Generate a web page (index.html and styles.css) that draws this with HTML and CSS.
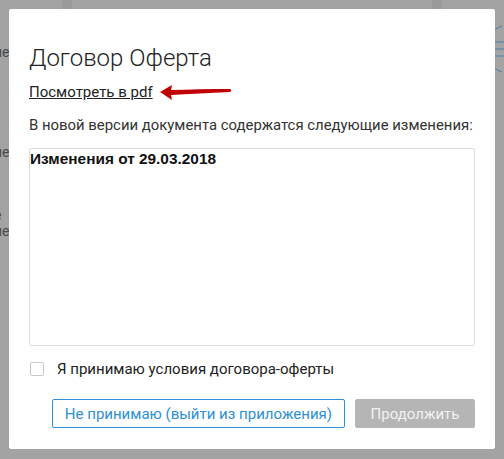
FILE: index.html
```html
<!DOCTYPE html>
<html lang="ru">
<head>
    <meta charset="UTF-8">
    <meta name="viewport" content="width=device-width, initial-scale=1.0">
    <title>Договор Оферта</title>
    <link rel="stylesheet" href="styles.css">
</head>
<body>
    <div class="backdrop">
        <span class="bg-word w1">ие</span>
        <span class="bg-word w2">ие</span>
        <span class="bg-word w3">е<br>ие</span>
        <div class="bg-bar b1"></div>
        <div class="bg-bar b2"></div>
        <svg class="bg-icon" width="20" height="50" viewBox="0 0 20 50">
            <path d="M18 2 C6 6 2 16 2 25 C2 34 6 44 18 48" fill="none" stroke="#4a7fa8" stroke-width="1"/>
            <path d="M6 18 H20 M6 25 H20 M6 32 H20 M8 18 V32" fill="none" stroke="#4a7fa8" stroke-width="1"/>
        </svg>
    </div>

    <div class="modal">
        <h1 class="modal-title">Договор Оферта</h1>

        <div class="pdf-row">
            <a href="#" class="pdf-link">Посмотреть в pdf</a>
            <svg class="arrow" width="74" height="18" viewBox="0 0 74 18">
                <path d="M1 8 L13 1 L12 6 C30 5.5 50 5 71 5 C72.5 5 72.5 8 71 8 C50 9 30 10 12 11 L13 16 Z" fill="#c00000"/>
            </svg>
        </div>

        <p class="intro">В новой версии документа содержатся следующие изменения:</p>

        <div class="changes">
            <b>Изменения от 29.03.2018</b>
        </div>

        <div class="accept">
            <input type="checkbox" id="accept">
            <label for="accept">Я принимаю условия договора-оферты</label>
        </div>

        <div class="actions">
            <button type="button" class="btn btn-outline">Не принимаю (выйти из приложения)</button>
            <button type="button" class="btn btn-disabled" disabled>Продолжить</button>
        </div>
    </div>
</body>
</html>
```

FILE: styles.css
```css
body {
    margin: 0;
    padding: 9px;
    background: #a3a3a3;
    font-family: Roboto, "Liberation Sans", sans-serif;
    position: relative;
}
.backdrop {
    position: absolute;
    top: 0;
    left: 0;
    width: 504px;
    height: 459px;
    overflow: hidden;
}
.bg-word {
    position: absolute;
    left: -6px;
    color: #4a4a4a;
    font-size: 14px;
    line-height: 16px;
}
.w1 { top: 44px; }
.w2 { top: 144px; }
.w3 { top: 207px; }
.bg-bar {
    position: absolute;
    top: 0;
    height: 9px;
    background: #9a9a9a;
    width: 10px;
}
.b1 { left: 62px; }
.b2 { left: 432px; }
.bg-icon {
    position: absolute;
    right: 0;
    top: 24px;
}
.modal {
    position: relative;
    background: #fff;
    width: 446px;
    height: 405px;
    padding: 35px 20px 0 20px;
    border-radius: 2px;
}
.modal-title {
    margin: 0;
    font-size: 24px;
    line-height: 28px;
    font-weight: 300;
    color: #222;
}
.pdf-row {
    display: flex;
    align-items: center;
    margin-top: 10px;
    height: 20px;
}
.pdf-link {
    color: #222;
    font-size: 15px;
    line-height: 20px;
    text-decoration: underline;
}
.arrow {
    margin-left: 6px;
    margin-top: 1px;
}
.intro {
    margin: 13px 0 0 0;
    font-size: 14.9px;
    line-height: 20px;
    color: #333;
    white-space: nowrap;
}
.changes {
    margin-top: 13px;
    height: 195px;
    border: 1px solid #dcdcdc;
    border-radius: 2px;
    padding: 1px 0 0 0;
    font-family: "Liberation Sans", Arial, sans-serif;
    font-size: 15.4px;
    line-height: 17px;
    color: #111;
}
.accept {
    display: flex;
    align-items: center;
    margin-top: 14px;
    height: 18px;
}
.accept input {
    appearance: none;
    width: 14px;
    height: 14px;
    margin: 0 13px 0 1px;
    border: 1px solid #c8c8c8;
    border-radius: 2px;
    background: #fff;
}
.accept label {
    font-size: 15px;
    color: #222;
}
.actions {
    display: flex;
    justify-content: flex-end;
    gap: 10px;
    margin-top: 21px;
}
.btn {
    height: 29px;
    padding: 0 12px;
    font-family: Roboto, "Liberation Sans", sans-serif;
    font-size: 15px;
    border-radius: 2px;
}
.btn-outline {
    background: #fff;
    color: #2d8fd5;
    border: 1px solid #2d8fd5;
    cursor: pointer;
}
.btn-disabled {
    background: #b5b5b5;
    color: #f2f2f2;
    border: 1px solid #b5b5b5;
    width: 120px;
}
```
